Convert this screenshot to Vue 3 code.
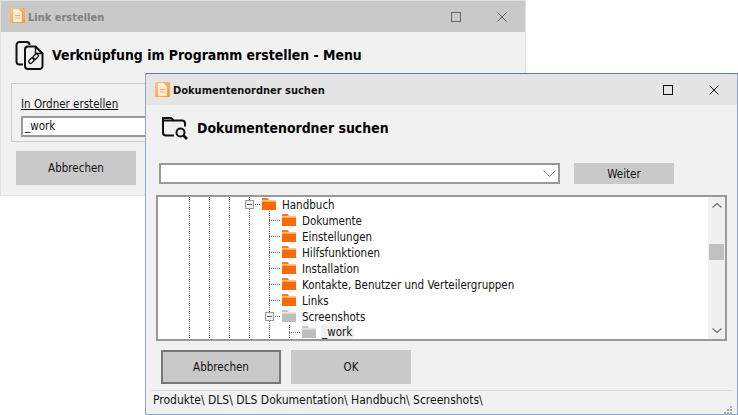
<script setup>
const folders = [
  { label: 'Handbuch', depth: 0, open: true },
  { label: 'Dokumente', depth: 1 },
  { label: 'Einstellungen', depth: 1 },
  { label: 'Hilfsfunktionen', depth: 1 },
  { label: 'Installation', depth: 1 },
  { label: 'Kontakte, Benutzer und Verteilergruppen', depth: 1 },
  { label: 'Links', depth: 1 },
  { label: 'Screenshots', depth: 1, open: true, grey: true },
  { label: '_work', depth: 2, grey: true, selected: true },
]
const guides = [
  { x: 31, top: 0 }, { x: 51, top: 0 }, { x: 71, top: 0 }, { x: 91, top: 0 },
  { x: 111, top: 8 }, { x: 131, top: 128 },
]
</script>

<template>
  <div class="desk">
    <section class="win back">
      <header class="bar">
        <svg class="appicon" viewBox="0 0 15 15">
          <defs><linearGradient id="ag" x1="0" y1="0" x2="1" y2="1"><stop offset="0" stop-color="#fcc48a"/><stop offset="1" stop-color="#f79a34"/></linearGradient></defs>
          <rect width="15" height="15" rx="1" fill="url(#ag)"/><path d="M3.500 1.500h5L11.500 4.500v9h-8z" fill="#ffeeda" stroke="#fff8ef" stroke-width=".6"/><path d="M5 7.500h5M5 10h5" stroke="#f9a54a"/>
        </svg>
        <span class="title dim">Link erstellen</span>
        <span class="ctl"><i class="max dimbox"></i><svg class="x" viewBox="0 0 10 10"><path d="M.5.5l9 9M9.500.5l-9 9" stroke="#666" fill="none"/></svg></span>
      </header>
      <div class="head headback">
        <svg width="29" height="29" viewBox="0 0 29 29" fill="none" stroke="#111" stroke-width="2">
          <path d="M8 23.500H4.500a3 3 0 0 1-3-3V4a3 3 0 0 1 3-3h7a3 3 0 0 1 3 3"/>
          <path d="M13 5.500h7.500l7 7V25a3 3 0 0 1-3 3H13a3 3 0 0 1-3-3V8.500a3 3 0 0 1 3-3z" fill="#f1f1f1"/>
          <path d="M20.500 5.500v7h7" stroke-width="1.500"/>
          <g stroke-width="1.300">
            <rect x="13.300" y="17.800" width="6.500" height="3.600" rx="1.800" transform="rotate(-45 16.500 19.600)"/>
            <rect x="17.300" y="14" width="6.500" height="3.600" rx="1.800" transform="rotate(-45 20.500 15.800)"/>
          </g>
        </svg>
        <h1>Verknüpfung im Programm erstellen - Menu</h1>
      </div>
      <fieldset class="group">
        <label class="link">In Ordner erstellen</label>
        <div class="field">_work</div>
      </fieldset>
      <button class="btn backbtn">Abbrechen</button>
    </section>

    <section class="win front">
      <header class="bar">
        <svg class="appicon" viewBox="0 0 15 15">
          <rect width="15" height="15" rx="1" fill="url(#ag)"/><path d="M3.500 1.500h5L11.500 4.500v9h-8z" fill="#ffeeda" stroke="#fff8ef" stroke-width=".6"/><path d="M5 7.500h5M5 10h5" stroke="#f9a54a"/>
        </svg>
        <span class="title">Dokumentenordner suchen</span>
        <span class="ctl"><i class="max"></i><svg class="x" viewBox="0 0 10 10"><path d="M.5.500l9 9M9.500.5l-9 9" stroke="#111" fill="none"/></svg></span>
      </header>
      <div class="head headfront">
        <svg width="27" height="25" viewBox="0 0 27 25" fill="none" stroke="#111" stroke-width="2">
          <path d="M12 19.500H4a3 3 0 0 1-3-3V2h8l3 2.500h8a3 3 0 0 1 3 3v3"/>
          <path d="M1 4.500h11" stroke-width="2"/>
          <circle cx="18.500" cy="16.500" r="4"/>
          <path d="M21.500 19.500l3.500 3.500" stroke-width="2.500"/>
        </svg>
        <h2>Dokumentenordner suchen</h2>
      </div>
      <div class="search">
        <div class="combo">
          <svg width="13" height="7" viewBox="0 0 13 7" fill="none" stroke="#999"><path d="M.5.5l6 6 6-6"/></svg>
        </div>
        <button class="btn weiter">Weiter</button>
      </div>
      <div class="tree">
        <div class="rows">
          <i v-for="g in guides" :key="g.x" class="guide" :style="{ left: g.x + 'px', top: g.top + 'px' }"></i>
          <div v-for="f in folders" :key="f.label" class="row" :class="'d' + f.depth">
            <span class="joint">
              <i class="dash"></i>
              <span v-if="f.open" class="exp"><i></i></span>
            </span>
            <svg class="folder" viewBox="0 0 14 12">
              <path d="M0 0h6l1 2H0z" :fill="f.grey ? '#c8c8c8' : '#ff7a1a'"/>
              <path d="M0 2h14v1.500H0z" :fill="f.grey ? '#e4e4e4' : '#ffc49a'"/>
              <path d="M0 3.500h14V12H0z" :fill="f.grey ? '#bdbdbd' : '#ff6a00'"/>
            </svg>
            <span class="lbl" :class="{ sel: f.selected }">{{ f.label }}</span>
          </div>
        </div>
        <div class="scroll">
          <svg width="10" height="5" viewBox="0 0 10 5" fill="none" stroke="#777" stroke-width="1.300"><path d="M.5 4.500l4.500-4 4.500 4"/></svg>
          <div class="thumb"></div>
          <svg width="10" height="5" viewBox="0 0 10 5" fill="none" stroke="#777" stroke-width="1.300"><path d="M.5.500l4.500 4 4.500-4"/></svg>
        </div>
      </div>
      <div class="actions">
        <button class="btn primary">Abbrechen</button>
        <button class="btn">OK</button>
      </div>
      <footer class="status">
        <span>Produkte\ DLS\ DLS Dokumentation\ Handbuch\ Screenshots\</span>
        <svg class="grip" width="8" height="8" viewBox="0 0 8 8" fill="#aaa"><rect x="6" y="0" width="2" height="2"/><rect x="3" y="3" width="2" height="2"/><rect x="6" y="3" width="2" height="2"/><rect x="0" y="6" width="2" height="2"/><rect x="3" y="6" width="2" height="2"/><rect x="6" y="6" width="2" height="2"/></svg>
      </footer>
    </section>
  </div>
</template>

<style>
html, body { margin: 0; background: #fff; }
</style>

<style scoped>
.desk { position: relative; width: 738px; height: 415px; overflow: hidden; font-family: "DejaVu Sans Condensed", "Open Sans", sans-serif; font-size: 11.5px; color: #111; }
.win { position: absolute; box-sizing: border-box; background: #f1f1f1; display: flex; flex-direction: column; }
.back { left: 0; top: 0; width: 526px; height: 196px; border: 1px solid #e1e1e1; }
.front { left: 145px; top: 73px; width: 593px; height: 342px; border: 1px solid #8ca6d0; border-top-color: #5b7aa8; }
.bar { height: 31px; flex: none; display: flex; align-items: center; padding-left: 9px; background: #e5e5e5; }
.back .bar { background: #c9c9c9; }
.appicon { width: 15px; height: 15px; flex: none; }
.back .appicon { margin-bottom: 2px; }
.title { margin-left: 3px; padding-top: 2px; font-weight: 700; font-size: 11px; }
.dim { color: #7f7f7f; }
.ctl { margin-left: auto; display: flex; align-items: center; gap: 36px; padding-right: 18px; }
.max { display: block; width: 8px; height: 8px; border: 1px solid #111; }
.dimbox { border-color: #666; }
.x { width: 10px; height: 10px; display: block; }
.head { display: flex; align-items: center; }
.headback { height: 46px; padding-left: 14px; gap: 8px; }
.headfront { height: 46px; padding-left: 16px; gap: 8px; }
h1, h2 { margin: 0; font-size: 13.900px; font-weight: 700; color: #000; }
.group { margin: 5px 0 0 10px; padding: 12px 9px 3px; width: 540px; height: 59px; box-sizing: border-box; border: 1px solid #ccc; }
.link { display: block; text-decoration: underline; line-height: 16px; margin-bottom: 4px; }
.field { box-sizing: border-box; height: 21px; border: 2px solid #999; background: #fff; padding-left: 2px; line-height: 17px; }
.btn { display: block; box-sizing: border-box; width: 120px; height: 34px; border: 0; padding: 0; background: #c9c9c9; font: inherit; color: #111; }
.backbtn { margin: 9px 0 0 15px; }
.search { display: flex; margin: 12px 0 0 13px; gap: 14px; }
.combo { box-sizing: border-box; width: 401px; height: 21px; border: 2px solid #999; background: #fff; display: flex; align-items: center; justify-content: flex-end; padding-right: 2px; }
.weiter { width: 100px; height: 21px; }
.tree { margin: 11px 0 0 10px; width: 571px; height: 146px; flex: none; box-sizing: border-box; border: 2px solid #999; background: #fff; display: flex; }
.rows { position: relative; flex: 1; overflow: hidden; }
.guide { position: absolute; bottom: 0; width: 1px; background: repeating-linear-gradient(#666 0 1px, transparent 1px 2px); }
.row { position: relative; height: 16px; display: flex; align-items: center; }
.d0 { padding-left: 84px; }
.d1 { padding-left: 104px; }
.d2 { padding-left: 124px; }
.joint { position: relative; width: 20px; height: 16px; flex: none; }
.dash { position: absolute; left: 7px; top: 7px; width: 12px; height: 1px; background: repeating-linear-gradient(90deg, #666 0 1px, transparent 1px 2px); }
.exp { position: absolute; left: 3px; top: 3px; box-sizing: border-box; width: 9px; height: 9px; border: 1px solid #999; background: #f1f1f1; display: flex; align-items: center; justify-content: center; }
.exp i { display: block; width: 5px; height: 1px; background: #4a5f85; }
.folder { width: 14px; height: 12px; flex: none; align-self: flex-start; margin-top: 1px; }
.lbl { margin-left: 5px; padding: 0 2px 0 1px; height: 16px; line-height: 17px; white-space: nowrap; }
.lbl.sel { background: #f0f0f0; line-height: 15px; }
.scroll { width: 17px; flex: none; background: #f0f0f0; display: flex; flex-direction: column; align-items: center; padding-top: 6px; box-sizing: border-box; }
.scroll svg:last-child { margin-top: auto; margin-bottom: 6px; }
.thumb { width: 15px; height: 16px; background: #c0c0c0; margin-top: 36px; }
.actions { display: flex; gap: 10px; margin: 9px 0 0 15px; }
.primary { border: 2px solid #777; }
.status { position: relative; margin: 6px 5px 0; border-top: 1px solid #dcdcdc; font-size: 12px; line-height: 19px; padding-left: 2px; }
.grip { position: absolute; right: 0; bottom: -4px; }
</style>
